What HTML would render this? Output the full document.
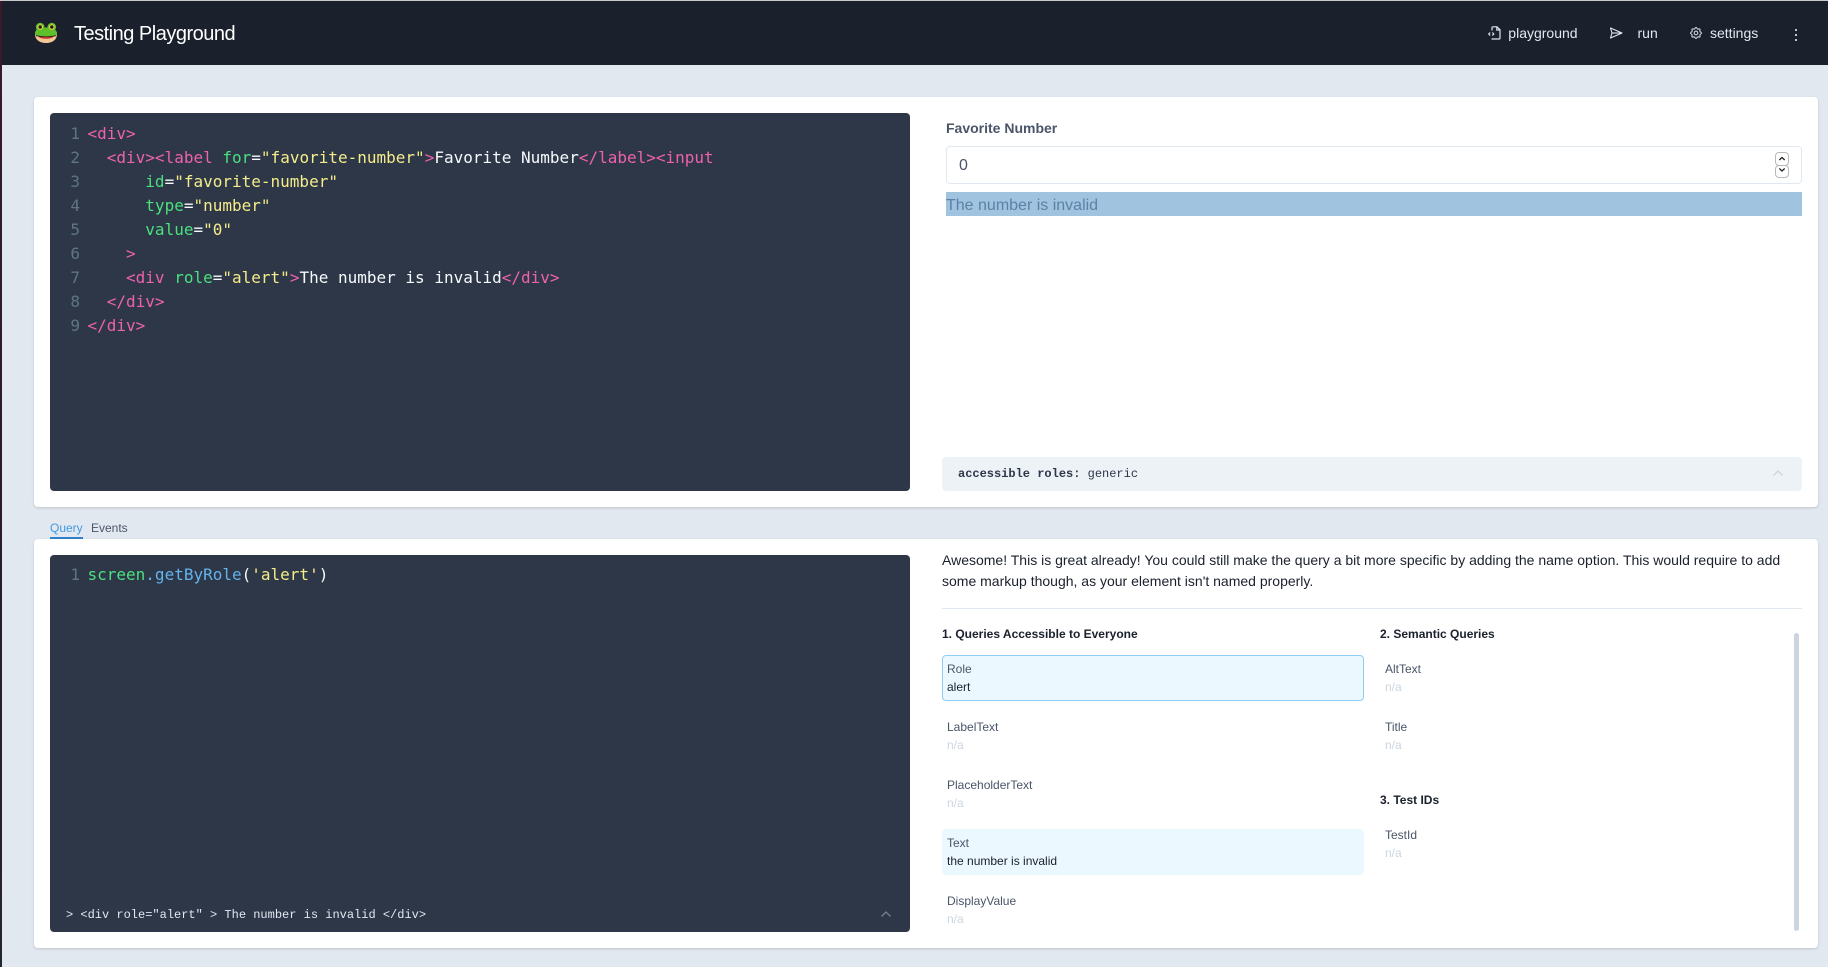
<!DOCTYPE html>
<html lang="en"><head><meta charset="utf-8"><title>Testing Playground</title>
<style>
*{box-sizing:border-box}
html,body{margin:0;padding:0;width:1828px;height:967px;overflow:hidden;background:#e2e8f0;font-family:"Liberation Sans",sans-serif}
.a{position:absolute;white-space:pre}
.card{position:absolute;background:#fff;border-radius:4px;box-shadow:0 1px 3px rgba(0,0,0,.1),0 1px 2px rgba(0,0,0,.06)}
.ed{position:absolute;background:#2d3748;border-radius:4px}
.c{position:absolute;left:87.5px;height:24px;font:16px/24px "DejaVu Sans Mono",monospace;white-space:pre;color:#f7fafc}
.n{position:absolute;left:60px;width:20px;text-align:right;height:24px;font:16px/24px "DejaVu Sans Mono",monospace;color:#5f7680}
.t{color:#ee62ac}.g{color:#4be07f}.s{color:#f5ec8a}.b{color:#63b3ed}.w{color:#f7fafc}
.lbl{font-size:12px;line-height:18px;color:#4a5568;height:18px}
.val{font-size:12px;line-height:18px;color:#1a202c;height:18px}
.na{font-size:12px;line-height:18px;color:#cbd5e0;height:18px}
.h{font-size:12px;line-height:18px;font-weight:700;color:#1a202c;height:18px}
.nav{font-size:14px;line-height:20px;color:#e2e8f0;top:23px;height:20px}
.m{font:12px/18px "Liberation Mono",monospace}
</style></head><body>
<div class="a" style="left:0;top:0;width:1828px;height:1px;background:#c9c9c9"></div>
<div class="a" style="left:2px;top:1px;width:1826px;height:64px;background:#1a202c"></div>
<div class="a" style="left:0;top:1px;width:2px;height:966px;background:linear-gradient(#3b1a2a,#2a1a2c 50%,#25252c)"></div>

<svg class="a" style="left:34px;top:21px" width="24" height="24" viewBox="0 0 24 24">
<path d="M1 13C1 9 4 7 6 6.500L17 6.500C20 7.500 23 9.500 23 13C23 19 18 22 12 22C6 22 1 19 1 13Z" fill="#f3c795"/>
<path d="M1 13C1 9 4 7 6 6.500L17 6.500C20 7.500 23 9.500 23 13C23 14 22.300 14.800 21 14.800C15 16 9 16 3 14.800C1.800 14.800 1 14 1 13Z" fill="#5fbf2a"/>
<circle cx="6.200" cy="6" r="4.300" fill="#5fbf2a"/><circle cx="17.800" cy="6" r="4.300" fill="#5fbf2a"/>
<circle cx="6.200" cy="6" r="2.800" fill="#e8d44a"/><circle cx="17.800" cy="6" r="2.800" fill="#e8d44a"/>
<circle cx="6.200" cy="6" r="1.700" fill="#1c1c1c"/><circle cx="17.800" cy="6" r="1.700" fill="#1c1c1c"/>
<path d="M4 15.300C9 16.200 15 16.200 20 15.300C19 16.800 16 17.800 12 17.800C8 17.800 5 16.800 4 15.300Z" fill="#d0342c"/>
<path d="M2 14.700C8 16 16 16 22 14.700" fill="none" stroke="#2b2b1f" stroke-width=".8"/>
</svg>
<div class="a" style="left:74px;top:20px;height:28px;font-size:20px;line-height:28px;color:#fff;letter-spacing:-.5px">Testing Playground</div>

<svg class="a" style="left:1488px;top:26px" width="13" height="14" viewBox="0 0 13 14" fill="none" stroke="#e2e8f0" stroke-width="1.200">
<path d="M4 4.500V1.500C4 1 4.300 .8 4.800 .8H9L12 3.800V12C12 12.600 11.600 13 11 13H3.500"/><path d="M8.800 1V4H12"/><path d="M2.200 6.500L.7 8L2.200 9.500M4.300 6.500L5.800 8L4.300 9.500"/>
</svg>
<div class="a nav" style="left:1508.300px">playground</div>
<svg class="a" style="left:1609px;top:27px" width="14" height="12" viewBox="0 0 14 12" fill="none" stroke="#e2e8f0" stroke-width="1.100" stroke-linejoin="round">
<path d="M1.500 1L13 6L1.500 11L3 6Z"/><path d="M3 6H13"/>
</svg>
<div class="a nav" style="left:1637.500px">run</div>
<svg class="a" style="left:1690px;top:27.200px" width="12" height="12" viewBox="2 2 20 20" fill="none" stroke="#cbd5e0" stroke-width="1.800">
<path d="M10.325 4.317c.426-1.756 2.924-1.756 3.35 0a1.724 1.724 0 002.573 1.066c1.543-.94 3.31.826 2.37 2.37a1.724 1.724 0 001.065 2.572c1.756.426 1.756 2.924 0 3.35a1.724 1.724 0 00-1.066 2.573c.94 1.543-.826 3.31-2.37 2.37a1.724 1.724 0 00-2.572 1.065c-.426 1.756-2.924 1.756-3.35 0a1.724 1.724 0 00-2.573-1.066c-1.543.94-3.31-.826-2.37-2.37a1.724 1.724 0 00-1.065-2.572c-1.756-.426-1.756-2.924 0-3.35a1.724 1.724 0 001.066-2.573c-.94-1.543.826-3.31 2.37-2.37.996.608 2.296.07 2.572-1.065z"/>
<circle cx="12" cy="12" r="3"/>
</svg>
<div class="a nav" style="left:1710px">settings</div>
<div class="a" style="left:1795.300px;top:29px;width:2px;height:2px;background:#f7fafc;border-radius:1px"></div>
<div class="a" style="left:1795.300px;top:34px;width:2px;height:2px;background:#f7fafc;border-radius:1px"></div>
<div class="a" style="left:1795.300px;top:39px;width:2px;height:2px;background:#f7fafc;border-radius:1px"></div>

<div class="card" style="left:34px;top:97px;width:1784px;height:410px"></div>
<div class="ed" style="left:50px;top:113px;width:860px;height:378px"></div>
<div class="n" style="top:122px">1</div><div class="c" style="top:122px"><span class="t">&lt;div&gt;</span></div>
<div class="n" style="top:146px">2</div><div class="c" style="top:146px">  <span class="t">&lt;div&gt;&lt;label</span> <span class="g">for</span>=<span class="s">"favorite-number"</span><span class="t">&gt;</span>Favorite Number<span class="t">&lt;/label&gt;&lt;input</span></div>
<div class="n" style="top:170px">3</div><div class="c" style="top:170px">      <span class="g">id</span>=<span class="s">"favorite-number"</span></div>
<div class="n" style="top:194px">4</div><div class="c" style="top:194px">      <span class="g">type</span>=<span class="s">"number"</span></div>
<div class="n" style="top:218px">5</div><div class="c" style="top:218px">      <span class="g">value</span>=<span class="s">"0"</span></div>
<div class="n" style="top:242px">6</div><div class="c" style="top:242px">    <span class="t">&gt;</span></div>
<div class="n" style="top:266px">7</div><div class="c" style="top:266px">    <span class="t">&lt;div</span> <span class="g">role</span>=<span class="s">"alert"</span><span class="t">&gt;</span>The number is invalid<span class="t">&lt;/div&gt;</span></div>
<div class="n" style="top:290px">8</div><div class="c" style="top:290px">  <span class="t">&lt;/div&gt;</span></div>
<div class="n" style="top:314px">9</div><div class="c" style="top:314px"><span class="t">&lt;/div&gt;</span></div>

<div class="a" style="left:946px;top:118px;height:20px;font-size:14px;line-height:20px;font-weight:700;color:#4a5568">Favorite Number</div>
<div class="a" style="left:946px;top:146px;width:856px;height:38px;border:1px solid #e2e8f0;border-radius:4px;background:#fff"></div>
<div class="a" style="left:959px;top:154px;height:24px;font-size:16px;line-height:24px;color:#4a5568">0</div>
<div class="a" style="left:1775px;top:152px;width:14px;height:14px;border:1px solid #b8b8b8;border-radius:4px"></div>
<div class="a" style="left:1775px;top:165px;width:14px;height:13px;border:1px solid #b8b8b8;border-radius:4px"></div>
<svg class="a" style="left:1775px;top:152px" width="14" height="26" viewBox="0 0 14 26" fill="none" stroke="#222" stroke-width="1.300"><path d="M4.300 8L7 5.500L9.700 8M4.300 16.500L7 19L9.700 16.500"/></svg>
<div class="a" style="left:946px;top:192px;width:856px;height:24px;background:#a0c3df"></div>
<div class="a" style="left:946px;top:194px;height:24px;font-size:16px;line-height:24px;color:#5b82a6">The number is invalid</div>

<div class="a" style="left:942px;top:457px;width:860px;height:34px;background:#edf2f7;border-radius:4px"></div>
<div class="a m" style="left:958px;top:465px;color:#2d3748"><b>accessible roles:</b> generic</div>
<svg class="a" style="left:1772px;top:468px" width="12" height="10" viewBox="0 0 12 10" fill="none" stroke="#cbd5e0" stroke-width="1.300"><path d="M1.500 7.500L6 3L10.500 7.500"/></svg>

<div class="a" style="left:50px;top:519px;height:18px;font-size:12px;line-height:18px;color:#4299e1">Query</div>
<div class="a" style="left:50px;top:537px;width:33px;height:2px;background:#3182ce"></div>
<div class="a" style="left:91px;top:519px;height:18px;font-size:12px;line-height:18px;color:#4a5568">Events</div>

<div class="card" style="left:34px;top:539px;width:1784px;height:409px"></div>
<div class="ed" style="left:50px;top:555px;width:860px;height:377px"></div>
<div class="n" style="top:563px">1</div><div class="c" style="top:563px"><span class="g">screen</span><span class="b">.getByRole</span><span class="w">(</span><span class="s">'alert'</span><span class="w">)</span></div>
<div class="a m" style="left:66px;top:906px;color:#e2e8f0">&gt; &lt;div role="alert" &gt; The number is invalid &lt;/div&gt;</div>
<svg class="a" style="left:880px;top:909px" width="12" height="10" viewBox="0 0 12 10" fill="none" stroke="#718096" stroke-width="1.300"><path d="M1.500 7.500L6 3L10.500 7.500"/></svg>

<div class="a" style="left:942px;top:549.500px;height:21px;font-size:14px;line-height:21px;color:#1a202c">Awesome! This is great already! You could still make the query a bit more specific by adding the name option. This would require to add</div>
<div class="a" style="left:942px;top:570.500px;height:21px;font-size:14px;line-height:21px;color:#1a202c">some markup though, as your element isn't named properly.</div>
<div class="a" style="left:942px;top:608px;width:860px;height:1px;background:#e2e8f0"></div>

<div class="a h" style="left:942px;top:625px">1. Queries Accessible to Everyone</div>
<div class="a" style="left:942px;top:655px;width:422px;height:46px;background:#ebf8ff;border:1px solid #90cdf4;border-radius:4px"></div>
<div class="a lbl" style="left:947px;top:660px">Role</div><div class="a val" style="left:947px;top:678px">alert</div>
<div class="a lbl" style="left:947px;top:718px">LabelText</div><div class="a na" style="left:947px;top:736px">n/a</div>
<div class="a lbl" style="left:947px;top:776px">PlaceholderText</div><div class="a na" style="left:947px;top:794px">n/a</div>
<div class="a" style="left:942px;top:829px;width:422px;height:46px;background:#ebf8ff;border-radius:4px"></div>
<div class="a lbl" style="left:947px;top:834px">Text</div><div class="a val" style="left:947px;top:852px">the number is invalid</div>
<div class="a lbl" style="left:947px;top:892px">DisplayValue</div><div class="a na" style="left:947px;top:910px">n/a</div>

<div class="a h" style="left:1380px;top:625px">2. Semantic Queries</div>
<div class="a lbl" style="left:1385px;top:660px">AltText</div><div class="a na" style="left:1385px;top:678px">n/a</div>
<div class="a lbl" style="left:1385px;top:718px">Title</div><div class="a na" style="left:1385px;top:736px">n/a</div>
<div class="a h" style="left:1380px;top:791px">3. Test IDs</div>
<div class="a lbl" style="left:1385px;top:826px">TestId</div><div class="a na" style="left:1385px;top:844px">n/a</div>
<div class="a" style="left:1794px;top:633px;width:5px;height:298px;background:#cbd5e0;border-radius:3px"></div>
</body></html>
